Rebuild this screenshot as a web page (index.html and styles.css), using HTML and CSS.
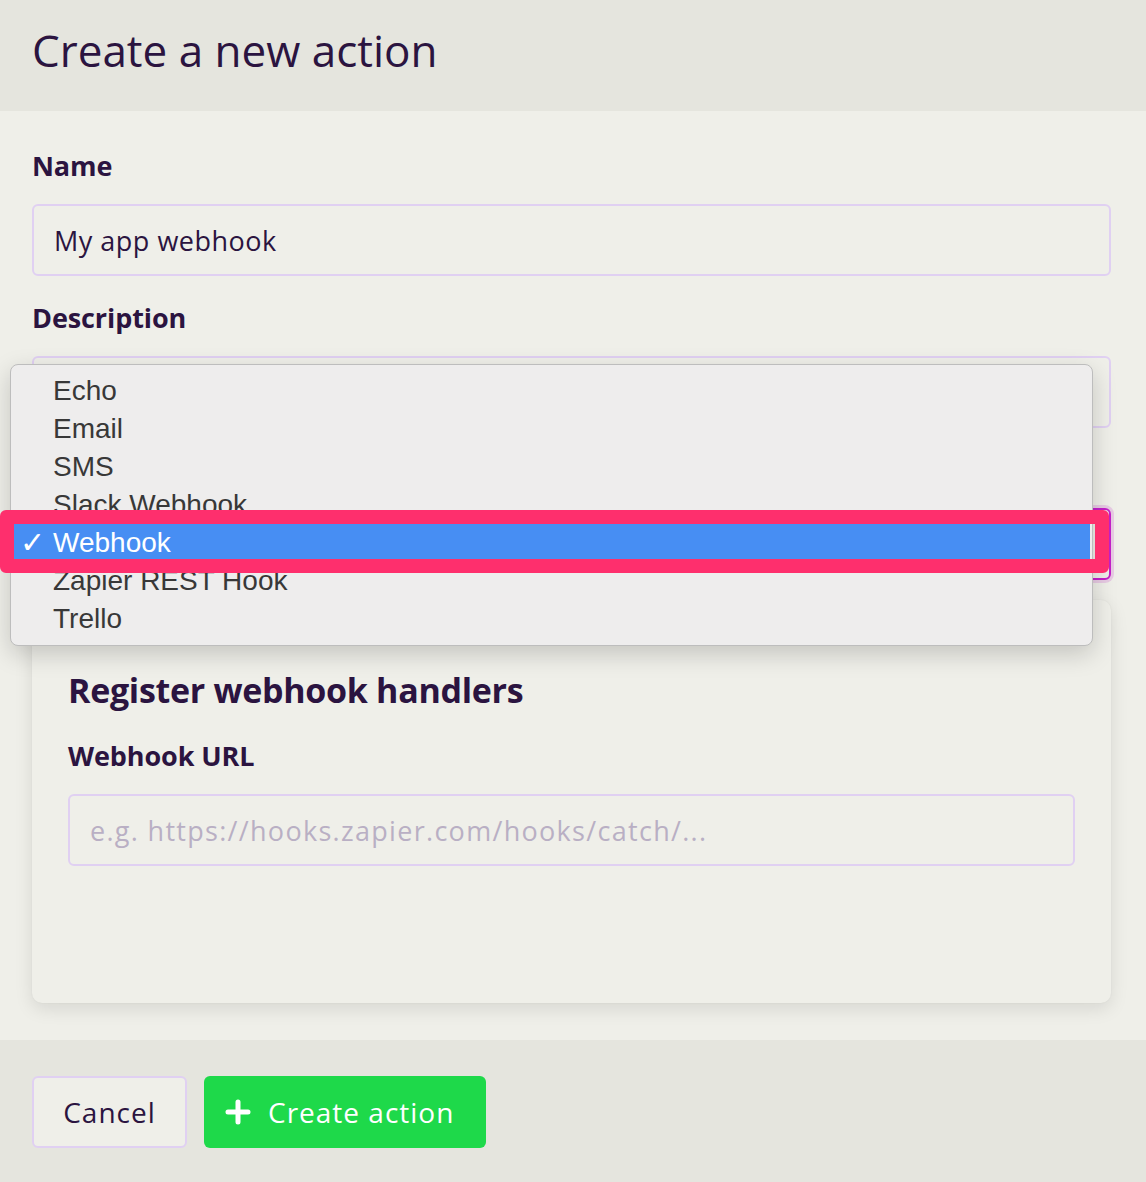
FILE: index.html
```html
<!DOCTYPE html>
<html lang="en">
<head>
<meta charset="utf-8">
<title>Create a new action</title>
<link rel="stylesheet" href="styles.css">
</head>
<body>
<div class="modal">
  <header class="modal-header">
    <h1 class="modal-title">Create a new action</h1>
  </header>
  <main class="modal-body">
    <div class="field">
      <label class="field-label">Name</label>
      <div class="input">My app webhook</div>
    </div>
    <div class="field">
      <label class="field-label">Description</label>
      <div class="input"></div>
    </div>
    <div class="field field-last">
      <label class="field-label">Type</label>
      <div class="input input-focus">Webhook</div>
    </div>
    <section class="card">
      <h2 class="card-title">Register webhook handlers</h2>
      <label class="field-label">Webhook URL</label>
      <div class="input placeholder">e.g. https://hooks.zapier.com/hooks/catch/...</div>
    </section>
  </main>
  <footer class="modal-footer">
    <button class="btn btn-cancel">Cancel</button>
    <button class="btn btn-primary">
      <svg class="plus" width="26" height="26" viewBox="0 0 26 26"><path d="M13 3v20M3 13h20" stroke="#fff" stroke-width="5" stroke-linecap="round" fill="none"/></svg>
      <span>Create action</span>
    </button>
  </footer>

  <ul class="menu">
    <li class="menu-item">Echo</li>
    <li class="menu-item">Email</li>
    <li class="menu-item">SMS</li>
    <li class="menu-item">Slack Webhook</li>
    <li class="menu-item selected"><span class="check">✓</span>Webhook</li>
    <li class="menu-item">Zapier REST Hook</li>
    <li class="menu-item">Trello</li>
  </ul>
  <div class="annotation"></div>
</div>
</body>
</html>
```
FILE: styles.css
```css
* { box-sizing: border-box; }
html, body { margin: 0; padding: 0; }
body {
  width: 1146px;
  height: 1182px;
  overflow: hidden;
  background: #efefe9;
  font-family: "Open Sans", "Lato", sans-serif;
  color: #2b1440;
}
.modal { position: relative; width: 1146px; }
.modal-header {
  height: 111px;
  background: #e5e5de;
  padding: 24px 32px 0;
}
.modal-title {
  margin: 0;
  font-size: 44px;
  font-weight: 400;
  line-height: 52px;
  color: #2b1440;
}
.modal-body {
  padding: 39px 35px 37px 32px;
  background: #efefe9;
}
.field { margin-bottom: 26px; }
.field-last { margin-bottom: 20px; }
.field-label {
  display: block;
  font-size: 27px;
  font-weight: 700;
  line-height: 32px;
  margin-bottom: 22px;
  letter-spacing: -0.1px;
  color: #2b1440;
}
.input {
  height: 72px;
  border: 2px solid #e0d0f2;
  border-radius: 6px;
  background: #efefe9;
  padding: 0 20px;
  display: flex;
  align-items: center;
  font-size: 27px;
  letter-spacing: 0.5px;
  color: #2b1440;
}
.input-focus {
  border-color: #c41fc9;
  box-shadow: 0 0 0 3px rgba(196, 31, 201, 0.18);
}
.placeholder { color: #b9afc4; letter-spacing: 1.3px; }
.card {
  background: #efefe9;
  border-radius: 10px;
  box-shadow: 0 6px 18px rgba(0, 0, 0, 0.1), 0 0 2px rgba(0, 0, 0, 0.06);
  padding: 68px 36px 0 36px;
  height: 403px;
}
.card-title {
  margin: 0 0 28px 0;
  font-size: 34px;
  font-weight: 700;
  line-height: 44px;
  letter-spacing: -0.3px;
  color: #2b1440;
}
.modal-footer {
  height: 142px;
  background: #e5e5de;
  padding: 36px 32px 0;
  display: flex;
  gap: 17px;
  align-items: flex-start;
}
.btn {
  height: 72px;
  border-radius: 6px;
  font-family: "Open Sans", "Lato", sans-serif;
  font-size: 28px;
  letter-spacing: 1px;
  display: flex;
  align-items: center;
  cursor: pointer;
}
.btn-cancel {
  width: 155px;
  justify-content: center;
  border: 2px solid #e0d0f2;
  background: #efefe9;
  color: #2b1440;
}
.btn-primary {
  width: 282px;
  border: none;
  background: #1ed94a;
  color: #fff;
  padding: 0 0 0 21px;
  gap: 17px;
}
.plus { display: block; }

.menu {
  position: absolute;
  left: 10px;
  top: 364px;
  width: 1083px;
  height: 282px;
  margin: 0;
  padding: 7px 0 9px 0;
  list-style: none;
  background: #eeeded;
  border: 1px solid #bdbdbd;
  border-radius: 8px;
  box-shadow: 0 8px 24px rgba(0, 0, 0, 0.18);
  font-family: "Liberation Sans", Arial, sans-serif;
  font-size: 28px;
  color: #383838;
}
.menu-item {
  position: relative;
  height: 38px;
  line-height: 38px;
  padding-left: 40px;
  margin: 0 2px;
}
.menu-item.selected {
  background: #478ef3;
  color: #fff;
}
.check {
  position: absolute;
  left: 7px;
  top: 0;
  font-size: 30px;
}
.annotation {
  position: absolute;
  left: 0;
  top: 510px;
  width: 1109px;
  height: 63px;
  border: 14px solid #fe2f6d;
  border-radius: 6px;
}
```
